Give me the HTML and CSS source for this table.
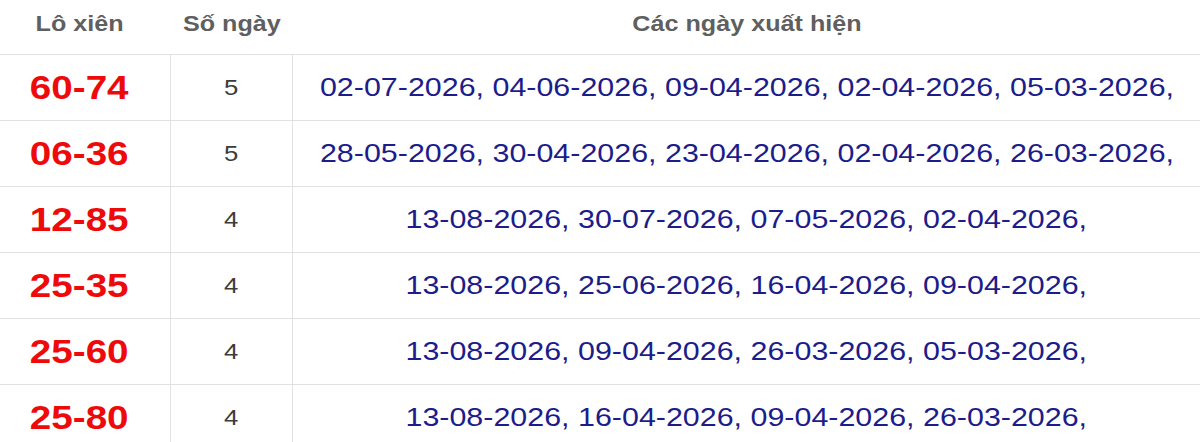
FILE: index.html
```html
<!DOCTYPE html>
<html lang="vi">
<head>
<meta charset="utf-8">
<title>Lô xiên</title>
<link rel="stylesheet" href="styles.css">
</head>
<body>
<div class="table">
  <div class="cell head"><span class="sx">Lô xiên</span></div>
  <div class="cell head"><span class="sx">Số ngày</span></div>
  <div class="cell head"><span class="sx">Các ngày xuất hiện</span></div>

  <div class="cell pair vline"><span class="sx">60-74</span></div>
  <div class="cell count vline"><span class="sx">5</span></div>
  <div class="cell dates"><span class="sx">02-07-2026, 04-06-2026, 09-04-2026, 02-04-2026, 05-03-2026,</span></div>

  <div class="cell pair vline"><span class="sx">06-36</span></div>
  <div class="cell count vline"><span class="sx">5</span></div>
  <div class="cell dates"><span class="sx">28-05-2026, 30-04-2026, 23-04-2026, 02-04-2026, 26-03-2026,</span></div>

  <div class="cell pair vline"><span class="sx">12-85</span></div>
  <div class="cell count vline"><span class="sx">4</span></div>
  <div class="cell dates"><span class="sx">13-08-2026, 30-07-2026, 07-05-2026, 02-04-2026,</span></div>

  <div class="cell pair vline"><span class="sx">25-35</span></div>
  <div class="cell count vline"><span class="sx">4</span></div>
  <div class="cell dates"><span class="sx">13-08-2026, 25-06-2026, 16-04-2026, 09-04-2026,</span></div>

  <div class="cell pair vline"><span class="sx">25-60</span></div>
  <div class="cell count vline"><span class="sx">4</span></div>
  <div class="cell dates"><span class="sx">13-08-2026, 09-04-2026, 26-03-2026, 05-03-2026,</span></div>

  <div class="cell pair vline"><span class="sx">25-80</span></div>
  <div class="cell count vline"><span class="sx">4</span></div>
  <div class="cell dates"><span class="sx">13-08-2026, 16-04-2026, 09-04-2026, 26-03-2026,</span></div>
</div>
</body>
</html>
```

FILE: styles.css
```css
html, body {
  margin: 0;
  padding: 0;
  background: #ffffff;
  overflow: hidden;
}

body {
  font-family: "Liberation Sans", Arial, sans-serif;
}

.table {
  display: grid;
  grid-template-columns: 183px 122px 1fr;
  margin-left: -12px;
}

.cell {
  box-sizing: border-box;
  height: 66px;
  border-bottom: 1px solid #e1e1e1;
  display: flex;
  align-items: center;
  justify-content: center;
  white-space: nowrap;
}

.vline {
  border-right: 1px solid #e1e1e1;
}

.sx {
  display: inline-block;
  transform: scaleX(1.17);
}

.head {
  height: 55px;
  padding-bottom: 5px;
  font-size: 21.5px;
  font-weight: bold;
  color: #5f5f5f;
}

.pair {
  font-size: 33px;
  font-weight: bold;
  color: #ee0a0a;
}

.count {
  font-size: 22px;
  color: #3c3c3c;
}

.dates {
  font-size: 26px;
  color: #1c1c8a;
}
```
